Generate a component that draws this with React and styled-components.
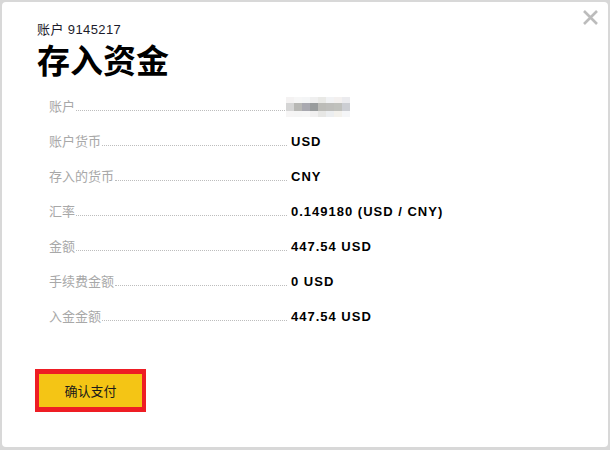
import React from "react";
import styled, { createGlobalStyle } from "styled-components";

const GlobalStyle = createGlobalStyle`
  html, body {
    margin: 0;
    padding: 0;
    background: #d8d8d8;
  }
  body {
    font-family: "Liberation Sans", "Noto Sans CJK SC", sans-serif;
  }
`;

const Page = styled.div`
  width: 610px;
  height: 450px;
  padding: 2px 2px 3px 2px;
  box-sizing: border-box;
`;

const Card = styled.div`
  position: relative;
  width: 100%;
  height: 100%;
  background: #fff;
  border-radius: 4px;
  padding: 20px 0 0 35px;
  box-sizing: border-box;
`;

const CloseButton = styled.button`
  position: absolute;
  top: 7px;
  right: 9px;
  width: 17px;
  height: 17px;
  padding: 0;
  border: none;
  background: none;
  cursor: pointer;
`;

const AccountLine = styled.div`
  font-size: 13px;
  line-height: 16px;
  color: #1c1c2c;
  letter-spacing: 0.4px;
`;

const Title = styled.h1`
  margin: 4px 0 0;
  font-size: 33px;
  line-height: 40px;
  font-weight: 700;
  color: #000;
`;

const Details = styled.div`
  margin: 7px 0 0 12px;
  display: flex;
  flex-direction: column;
`;

const Row = styled.div`
  display: flex;
  align-items: center;
  height: 35px;
`;

const LabelCell = styled.div`
  width: 238px;
  display: flex;
  align-items: flex-end;
  font-size: 13px;
  line-height: 16px;
  color: #a8a8a8;
`;

const Leader = styled.span`
  flex: 1;
  border-bottom: 1px dotted #bdbdbd;
  margin: 0 0 4px 1px;
`;

const Value = styled.div`
  margin-left: ${(p) => (p.$blur ? "-1px" : "4px")};
  font-size: 13px;
  font-weight: 700;
  letter-spacing: 1px;
  color: #000;
`;

const PayButton = styled.button`
  margin-top: 35px;
  margin-left: -2px;
  width: 111px;
  height: 43px;
  background: #f4c515;
  border: 4px solid #ee1d24;
  border-top-width: 5px;
  border-bottom-width: 5px;
  font-family: "Liberation Sans", "Noto Sans CJK SC", sans-serif;
  font-size: 13px;
  color: #1a1a1a;
  cursor: pointer;
`;

const blurRows = [
  ["#f4f2f2", "#f6f6f6", "#f4f5f6", "#efefef", "#e9e9e6", "#f1f2f4", "#f3f0ef", "#ebebee"],
  ["#d5d5d5", "#b8b8b5", "#a9a9b0", "#999c9d", "#bcbcb8", "#bebebb", "#c0c1bd", "#ccced3"],
  ["#f6f5f5", "#f5f5f5", "#f6f6f6", "#f1f0f0", "#e7e7e5", "#eceef0", "#f3f1ec", "#f5f6f8"],
];

function BlurredNumber() {
  const heights = [6, 8, 6];
  const tops = [0, 6, 14];
  return (
    <svg width="64" height="20" viewBox="0 0 64 20" style={{ display: "block" }}>
      {blurRows.map((row, r) =>
        row.map((c, i) => (
          <rect key={`${r}-${i}`} x={i * 8} y={tops[r]} width="8" height={heights[r]} fill={c} />
        ))
      )}
    </svg>
  );
}

const rows = [
  { label: "账户", blur: true },
  { label: "账户货币", value: "USD" },
  { label: "存入的货币", value: "CNY" },
  { label: "汇率", value: "0.149180 (USD / CNY)" },
  { label: "金额", value: "447.54 USD" },
  { label: "手续费金额", value: "0 USD" },
  { label: "入金金额", value: "447.54 USD" },
];

export default function App() {
  return (
    <Page>
      <GlobalStyle />
      <Card>
        <CloseButton aria-label="close">
          <svg width="17" height="17" viewBox="0 0 17 17">
            <path d="M2 2 L15 15 M15 2 L2 15" stroke="#bcbcbc" strokeWidth="2.6" />
          </svg>
        </CloseButton>
        <AccountLine>账户 9145217</AccountLine>
        <Title>存入资金</Title>
        <Details>
          {rows.map((r) => (
            <Row key={r.label}>
              <LabelCell>
                {r.label}
                <Leader />
              </LabelCell>
              <Value $blur={r.blur}>{r.blur ? <BlurredNumber /> : r.value}</Value>
            </Row>
          ))}
        </Details>
        <PayButton>确认支付</PayButton>
      </Card>
    </Page>
  );
}
